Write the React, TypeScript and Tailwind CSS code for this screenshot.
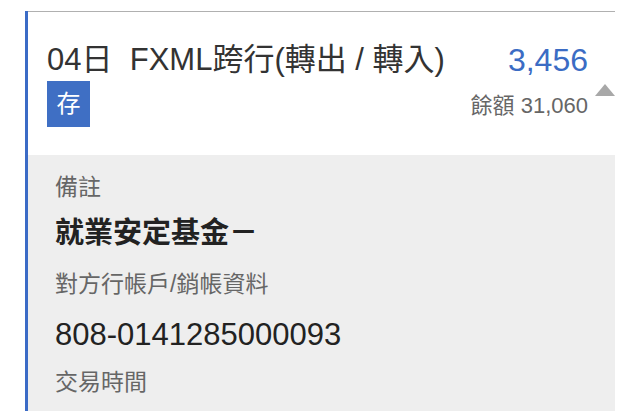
import React from "react";

export default function App() {
  const font = { fontFamily: '"Liberation Sans", "Noto Sans CJK TC", sans-serif' };
  return (
    <div className="w-[640px] h-[411px] bg-white overflow-hidden pt-[11px] pl-[25px]" style={font}>
      <div className="w-[590px] h-[400px] border-l-[3px] border-[#3b6bc6] flex flex-col">
        <div className="relative bg-white border-t border-[#b0b0b0] pl-[19px] pr-[27px] pt-[31px] pb-[28px]">
          <div className="flex justify-between items-start">
            <div className="flex flex-col">
              <div className="text-[31px] leading-[34px] text-[#333] whitespace-pre">04日  FXML跨行(轉出 / 轉入)</div>
              <div className="mt-[4px] w-[43px] h-[46px] bg-[#3f6fc4] text-white text-[24px] flex items-center justify-center">存</div>
            </div>
            <div className="flex flex-col items-end">
              <div className="text-[32px] leading-[34px] text-[#3b6cc4]">3,456</div>
              <div className="mt-[16px] text-[22px] leading-[26px] text-[#666]">餘額 31,060</div>
            </div>
          </div>
          <div className="absolute right-0 top-[72px] w-0 h-0 border-l-[10px] border-r-[10px] border-b-[12px] border-l-transparent border-r-transparent border-b-[#a8a8a8]" />
        </div>
        <div className="flex-1 bg-[#eeeeee] pl-[27px] pt-[17px]">
          <div className="text-[23px] leading-[30px] text-[#666]">備註</div>
          <div className="mt-[13px] text-[29px] leading-[36px] font-bold text-[#222]">就業安定基金－</div>
          <div className="mt-[18px] text-[23px] leading-[30px] text-[#666]">對方行帳戶/銷帳資料</div>
          <div className="mt-[18px] text-[31px] leading-[36px] text-[#222]">808-0141285000093</div>
          <div className="mt-[14px] text-[23px] leading-[30px] text-[#666]">交易時間</div>
        </div>
      </div>
    </div>
  );
}
